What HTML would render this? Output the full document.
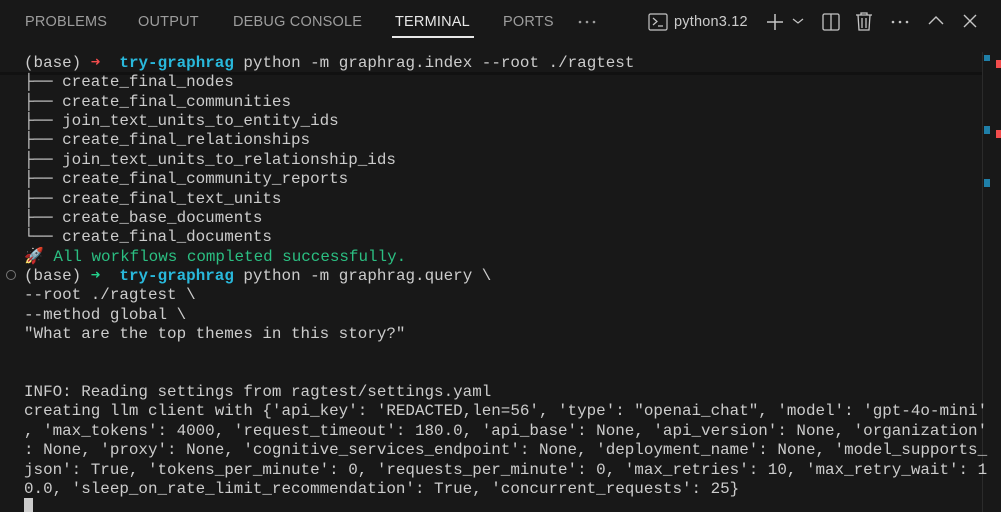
<!DOCTYPE html>
<html><head><meta charset="utf-8"><style>
html,body{margin:0;padding:0;background:#181818;width:1001px;height:512px;overflow:hidden;position:relative}
.tabs{position:absolute;top:0;left:0;right:0;height:44px;font-family:"Liberation Sans",sans-serif;font-size:14.5px;color:#9d9d9d}
.tabs span{position:absolute;top:14px;letter-spacing:0.2px}
.act{color:#e7e7e7;}
.ul{position:absolute;left:392px;top:36px;width:82px;height:2px;background:#e7e7e7}
.term{position:absolute;left:24px;top:54px;font-family:"Liberation Mono",monospace;font-size:15.9px;line-height:19.36px;color:#cccccc;white-space:pre}
.cy{color:#29b8db;font-weight:bold}
.rd{color:#f14c4c}
.gr{color:#23d18b}
.ok{color:#2bbf82}
.sep{position:absolute;left:0;top:72px;width:982px;height:3px;background:#111}
.sb{position:absolute;left:982px;top:52px;width:1px;height:460px;background:#2b2b2b}
.m{position:absolute;width:6px;height:6px}
svg{position:absolute}
</style></head><body>
<div class="tabs">
<span style="left:25px">PROBLEMS</span>
<span style="left:138px">OUTPUT</span>
<span style="left:233px">DEBUG CONSOLE</span>
<span class="act" style="left:395px">TERMINAL</span>
<span style="left:503px">PORTS</span>
<span style="left:674px;color:#cccccc">python3.12</span>
</div>
<svg style="left:578px;top:19px" width="18" height="6" viewBox="0 0 18 6" fill="#9d9d9d"><circle cx="2" cy="3" r="1.3"/><circle cx="9" cy="3" r="1.3"/><circle cx="16" cy="3" r="1.3"/></svg>
<div class="ul"></div>
<svg style="left:648px;top:12px" width="20" height="20" viewBox="0 0 20 20" fill="none" stroke="#c5c5c5" stroke-width="1.2"><rect x="1" y="2" width="18" height="16" rx="1.5"/><path d="M5 6l4 3.5L5 13M10 14h5"/></svg>
<svg style="left:765px;top:12px" width="20" height="20" viewBox="0 0 20 20" fill="none" stroke="#c5c5c5" stroke-width="1.5"><path d="M10 2v16M2 10h16"/></svg>
<svg style="left:792px;top:16px" width="12" height="10" viewBox="0 0 12 10" fill="none" stroke="#c5c5c5" stroke-width="1.2"><path d="M1 3l5 4 5-4"/></svg>
<svg style="left:821px;top:12px" width="20" height="20" viewBox="0 0 20 20" fill="none" stroke="#c5c5c5" stroke-width="1.3"><rect x="2" y="2" width="16" height="16" rx="1.5"/><path d="M10 2v16"/></svg>
<svg style="left:855px;top:11px" width="18" height="21" viewBox="0 0 18 21" fill="none" stroke="#c5c5c5" stroke-width="1.3"><path d="M1 4h16M6 4V2h6v2M3 4l1 15h10l1-15M7 7v10M11 7v10"/></svg>
<svg style="left:890px;top:19px" width="20" height="6" viewBox="0 0 20 6" fill="#c5c5c5"><circle cx="3" cy="3" r="1.3"/><circle cx="10" cy="3" r="1.3"/><circle cx="17" cy="3" r="1.3"/></svg>
<svg style="left:927px;top:14px" width="18" height="12" viewBox="0 0 18 12" fill="none" stroke="#c5c5c5" stroke-width="1.4"><path d="M2 10l7-7 7 7"/></svg>
<svg style="left:962px;top:13px" width="16" height="16" viewBox="0 0 16 16" fill="none" stroke="#c5c5c5" stroke-width="1.4"><path d="M2 2l12 12M14 2L2 14"/></svg>
<div class="sep"></div>
<div class="sb"></div>
<div class="m" style="left:984px;top:55px;background:#1f7fa8"></div>
<div class="m" style="left:996px;top:60px;width:5px;height:8px;background:#f14c4c"></div>
<div class="m" style="left:984px;top:126px;background:#1f7fa8;height:8px"></div>
<div class="m" style="left:996px;top:130px;width:5px;height:8px;background:#f14c4c"></div>
<div class="m" style="left:984px;top:179px;background:#1f7fa8;height:8px"></div>
<div style="position:absolute;left:6px;top:270px;width:8px;height:8px;border:1.5px solid #777;border-radius:50%"></div>
<div style="position:absolute;left:24px;top:498px;width:9px;height:14px;background:#cccccc"></div>
<div class="term">(base) <span class="rd">➜</span>  <span class="cy">try-graphrag</span> python -m graphrag.index --root ./ragtest
├── create_final_nodes
├── create_final_communities
├── join_text_units_to_entity_ids
├── create_final_relationships
├── join_text_units_to_relationship_ids
├── create_final_community_reports
├── create_final_text_units
├── create_base_documents
└── create_final_documents
<span class="ok">🚀 All workflows completed successfully.</span>
(base) <span class="gr">➜</span>  <span class="cy">try-graphrag</span> python -m graphrag.query \
--root ./ragtest \
--method global \
"What are the top themes in this story?"


INFO: Reading settings from ragtest/settings.yaml
creating llm client with {'api_key': 'REDACTED,len=56', 'type': "openai_chat", 'model': 'gpt-4o-mini'
, 'max_tokens': 4000, 'request_timeout': 180.0, 'api_base': None, 'api_version': None, 'organization'
: None, 'proxy': None, 'cognitive_services_endpoint': None, 'deployment_name': None, 'model_supports_
json': True, 'tokens_per_minute': 0, 'requests_per_minute': 0, 'max_retries': 10, 'max_retry_wait': 1
0.0, 'sleep_on_rate_limit_recommendation': True, 'concurrent_requests': 25}</div>
</body></html>
